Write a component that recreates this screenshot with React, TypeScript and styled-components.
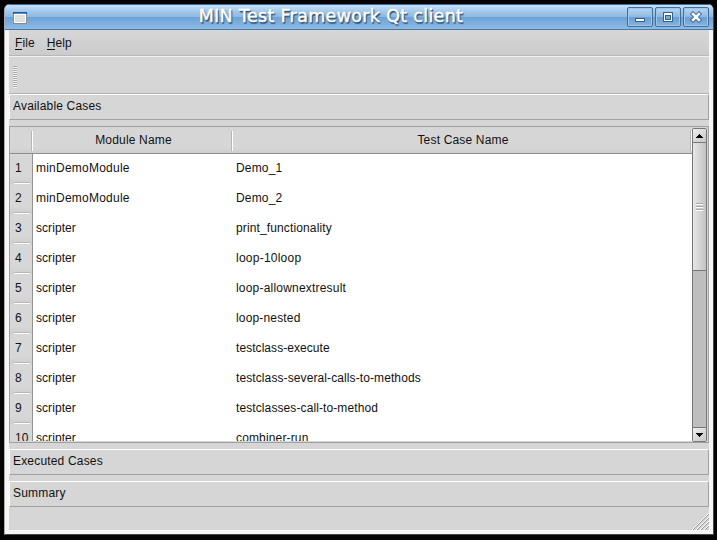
import React from 'react';
import styled, { createGlobalStyle } from 'styled-components';

const GlobalStyle = createGlobalStyle`
  * { box-sizing: border-box; }
  body { margin: 0; background: #050403; overflow: hidden; }
`;

const Desktop = styled.div`
  width: 717px;
  height: 540px;
  padding: 4px 3px 5px 4px;
  background: #050403;
  font: 12px/14px "Liberation Sans", Arial, sans-serif;
  color: #111;
`;

const Window = styled.div`
  width: 710px;
  height: 531px;
  display: flex;
  flex-direction: column;
  background: #f6f6f6;
  border: 1px solid #48494a;
  border-top: 0;
  border-left-color: #aaa;
  border-radius: 6px 6px 0 0;
  overflow: hidden;
`;

const TitleBar = styled.header`
  height: 26px;
  flex: none;
  display: grid;
  grid-template-columns: 48px 1fr 104px;
  border-top: 1px solid #356b9f;
  border-bottom: 1px solid #4778a5;
  background: linear-gradient(#c8e1f7 0, #a5caeb 25%, #8bb9e2 50%, #6da2d6 51%, #8fbae4 100%);
`;

const WindowIcon = styled.svg`
  display: block;
  margin: 7px 0 0 8px;
`;

const Title = styled.div`
  font: 17.5px/23px "DejaVu Sans", sans-serif;
  letter-spacing: 0.32px;
  text-align: center;
  white-space: nowrap;
  color: #fff;
  text-shadow: 1px 1px 1px #24486b, 1px 2px 1px #3c648a;
  -webkit-text-stroke: 0.45px #fff;
`;

const WindowButtons = styled.div`
  display: flex;
  gap: 2px;
  padding: 2px 0 0 18px;
`;

const WindowButton = styled.button`
  width: 26px;
  height: 20px;
  flex: none;
  padding: 0;
  border: 1px solid #416e9b;
  border-radius: 2px;
  background: linear-gradient(#b8d6f0 0, #8ebbe2 48%, #699fd3 50%, #83b2df 100%);
  box-shadow: inset 0 0 0 1px #a0c5e6;
  svg { display: block; }
`;

const Client = styled.main`
  width: 700px;
  height: 500px;
  margin-left: 4px;
  display: flex;
  flex-direction: column;
  background: #d6d6d6;
`;

const MenuBar = styled.nav`
  height: 26px;
  flex: none;
  display: flex;
  gap: 12px;
  padding: 6px 6px 0;
  border-bottom: 1px solid #b8b8b8;
  background: linear-gradient(#d7d7d7, #cbcbcb);
`;

const MenuItem = styled.span`
  letter-spacing: 0.08px;
`;

const Mnemonic = styled.span`
  display: inline-block;
  height: 14px;
  border-bottom: 1px solid #111;
`;

const ToolBar = styled.div`
  height: 38px;
  flex: none;
  padding: 9px 4px;
  border-top: 1px solid #f1f1f1;
  border-bottom: 1px solid #b3b3b3;
`;

const Grip = styled.div`
  width: 4px;
  height: 22px;
  background: repeating-linear-gradient(#aaa 0 1px, #f4f4f4 1px 2px);
`;

const Section = styled.button`
  height: 26px;
  flex: none;
  display: block;
  width: 700px;
  padding: 0 3px 2px;
  text-align: left;
  font: inherit;
  letter-spacing: 0.18px;
  color: inherit;
  background: #d6d6d6;
  border: 1px solid #fff;
  border-right-color: #a1a1a1;
  border-bottom-color: #a1a1a1;
`;

const TableFrame = styled.section`
  height: 317px;
  flex: none;
  margin: 6px 0;
  display: flex;
  border: 1px solid #a0a0a0;
  background: #d6d6d6;
`;

const Table = styled.div`
  width: 682px;
  height: 314px;
  overflow: hidden;
`;

const HeaderRow = styled.div`
  height: 27px;
  display: grid;
  grid-template-columns: 23px 200px 459px;
  border-bottom: 1px solid #8e8e8e;
  background: linear-gradient(#d6d6d6 80%, #cecece);
`;

const HeaderCell = styled.div`
  display: flex;
  justify-content: center;
  padding: 6px 0 0 1px;
  letter-spacing: 0.17px;
  background:
    linear-gradient(#b5b5b5, #b5b5b5) right 1px top 4px / 1px 20px no-repeat,
    linear-gradient(#fff, #fff) right 0 top 4px / 1px 20px no-repeat;
`;

const Row = styled.div`
  height: 30px;
  display: grid;
  grid-template-columns: 23px 200px 1fr;
  background: #fff;
`;

const RowNumber = styled.div`
  padding: 7px 0 0 5px;
  white-space: nowrap;
  border-right: 1px solid #929292;
  background:
    linear-gradient(#b8b8b8, #b8b8b8) 4px 28px / 16px 1px no-repeat,
    linear-gradient(#fff, #fff) 4px 29px / 16px 1px no-repeat,
    linear-gradient(#d7d7d7 75%, #cdcdcd);
`;

const Cell = styled.div<{ $spacing: number }>`
  padding: 7px 0 0 3px;
  white-space: nowrap;
  letter-spacing: ${p => p.$spacing}px;
`;

const ScrollBar = styled.div`
  width: 15px;
  height: 314px;
  margin-top: 1px;
  display: flex;
  flex-direction: column;
  border: 1px solid #777;
  border-radius: 2px;
  background: #bebebe;
`;

const Arrow = styled.button<{ $down?: boolean }>`
  width: 13px;
  height: 14px;
  flex: none;
  padding: 0;
  border: 0 solid #777;
  border-width: ${p => (p.$down ? '1px 0 0' : '0 0 1px')};
  background: linear-gradient(135deg, #eee, #c7c7c7);
  svg { display: block; }
`;

const Thumb = styled.div`
  height: 128px;
  flex: none;
  padding: 60px 3px 0;
  border-bottom: 1px solid #777;
  background: linear-gradient(90deg, #e6e6e6, #c3c3c3);
`;

const ThumbGrip = styled.div`
  height: 8px;
  background: repeating-linear-gradient(#aaa 0 1px, #fff 1px 2px, #ccc 2px 3px);
`;

const Track = styled.div`
  flex: 1;
`;

const Gap = styled.div`
  height: 6px;
  flex: none;
`;

const StatusBar = styled.footer`
  flex: 1;
  display: flex;
  align-items: flex-end;
  justify-content: flex-end;
`;

interface TestCase {
  module: string;
  name: string;
  tracking: number;
}

const cases: TestCase[] = [
  { module: 'minDemoModule', name: 'Demo_1', tracking: 0.17 },
  { module: 'minDemoModule', name: 'Demo_2', tracking: 0.17 },
  { module: 'scripter', name: 'print_functionality', tracking: 0.13 },
  { module: 'scripter', name: 'loop-10loop', tracking: 0.24 },
  { module: 'scripter', name: 'loop-allownextresult', tracking: 0.2 },
  { module: 'scripter', name: 'loop-nested', tracking: 0.16 },
  { module: 'scripter', name: 'testclass-execute', tracking: 0.06 },
  { module: 'scripter', name: 'testclass-several-calls-to-methods', tracking: 0.1 },
  { module: 'scripter', name: 'testclasses-call-to-method', tracking: 0.1 },
  { module: 'scripter', name: 'combiner-run', tracking: 0.15 },
];

export default function App() {
  return (
    <Desktop>
      <GlobalStyle />
      <Window>
        <TitleBar>
          <WindowIcon width="14" height="12" shapeRendering="crispEdges">
            <rect width="14" height="12" fill="#8c8c87" />
            <rect x="1" y="2" width="12" height="9" fill="#fff" />
            <rect x="2" y="3" width="10" height="7" fill="#dce0df" />
            <rect width="14" height="2" fill="#2457a4" />
            <rect x="1" y="1" width="12" height="1" fill="#5c8cc9" />
          </WindowIcon>
          <Title>MIN Test Framework Qt client</Title>
          <WindowButtons>
            <WindowButton aria-label="Minimize">
              <svg width="24" height="18" shapeRendering="crispEdges">
                <rect x="7" y="10" width="10" height="4" fill="#34618e" />
                <rect x="8" y="11" width="8" height="2" fill="#fff" />
              </svg>
            </WindowButton>
            <WindowButton aria-label="Maximize">
              <svg width="24" height="18" shapeRendering="crispEdges">
                <rect x="7" y="4" width="10" height="10" fill="#34618e" />
                <rect x="8" y="5" width="8" height="8" fill="#fff" />
                <rect x="9" y="7" width="6" height="5" fill="#34618e" />
                <rect x="10" y="8" width="4" height="3" fill="#79aada" />
              </svg>
            </WindowButton>
            <WindowButton aria-label="Close">
              <svg width="24" height="18">
                <path d="M9 6 15 12 M15 6 9 12" stroke="#34618e" strokeWidth="4.4" strokeLinecap="square" />
                <path d="M9 6 15 12 M15 6 9 12" stroke="#fff" strokeWidth="2.6" strokeLinecap="square" />
              </svg>
            </WindowButton>
          </WindowButtons>
        </TitleBar>
        <Client>
          <MenuBar>
            <MenuItem><Mnemonic>F</Mnemonic>ile</MenuItem>
            <MenuItem><Mnemonic>H</Mnemonic>elp</MenuItem>
          </MenuBar>
          <ToolBar><Grip /></ToolBar>
          <Section>Available Cases</Section>
          <TableFrame>
            <Table>
              <HeaderRow>
                <HeaderCell />
                <HeaderCell>Module Name</HeaderCell>
                <HeaderCell>Test Case Name</HeaderCell>
              </HeaderRow>
              {cases.map(({ module, name, tracking }, i) => (
                <Row key={name}>
                  <RowNumber>{i + 1}</RowNumber>
                  <Cell $spacing={module === 'scripter' ? 0.06 : 0.23}>{module}</Cell>
                  <Cell $spacing={tracking}>{name}</Cell>
                </Row>
              ))}
            </Table>
            <ScrollBar>
              <Arrow aria-label="Scroll up">
                <svg width="13" height="13" shapeRendering="crispEdges">
                  <path d="M6 5h1v1h1v1h1v1h1v1H3V8h1V7h1V6h1z" fill="#000" />
                </svg>
              </Arrow>
              <Thumb><ThumbGrip /></Thumb>
              <Track />
              <Arrow $down aria-label="Scroll down">
                <svg width="13" height="13" shapeRendering="crispEdges">
                  <path d="M3 5h7v1H9v1H8v1H7v1H6V8H5V7H4V6H3z" fill="#000" />
                </svg>
              </Arrow>
            </ScrollBar>
          </TableFrame>
          <Section>Executed Cases</Section>
          <Gap />
          <Section>Summary</Section>
          <StatusBar>
            <svg width="17" height="17">
              <path d="M1 17 17 1M5 17 17 5M9 17 17 9M13 17 17 13" stroke="#999" />
              <path d="M0 17 17 0M4 17 17 4M8 17 17 8M12 17 17 12" stroke="#fff" />
            </svg>
          </StatusBar>
        </Client>
      </Window>
    </Desktop>
  );
}
